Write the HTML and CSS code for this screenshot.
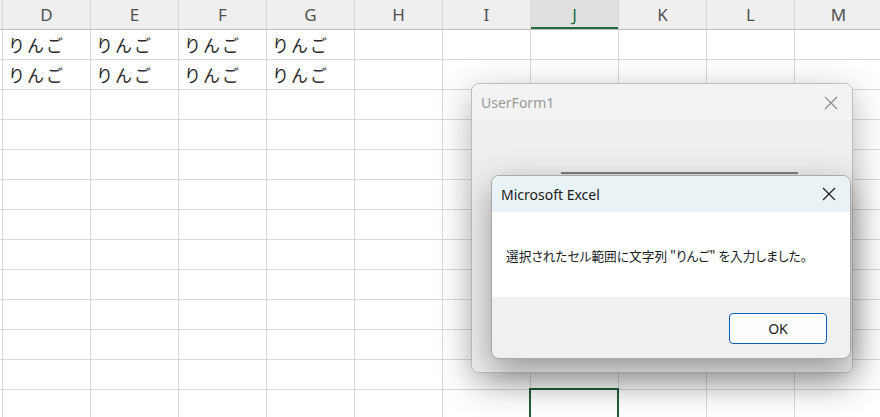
FILE: index.html
```html
<!DOCTYPE html>
<html lang="ja">
<head>
<meta charset="utf-8">
<title>Excel</title>
<link rel="stylesheet" href="styles.css">
</head>
<body>
<div class="sheet">
  <div class="row head">
    <div class="c edge"></div><div class="c">D</div><div class="c">E</div><div class="c">F</div><div class="c">G</div><div class="c">H</div><div class="c">I</div><div class="c sel">J</div><div class="c">K</div><div class="c">L</div><div class="c">M</div>
  </div>
  <div class="row">
    <div class="c edge"></div><div class="c">りんご</div><div class="c">りんご</div><div class="c">りんご</div><div class="c">りんご</div><div class="c"></div><div class="c"></div><div class="c"></div><div class="c"></div><div class="c"></div><div class="c"></div>
  </div>
  <div class="row">
    <div class="c edge"></div><div class="c">りんご</div><div class="c">りんご</div><div class="c">りんご</div><div class="c">りんご</div><div class="c"></div><div class="c"></div><div class="c"></div><div class="c"></div><div class="c"></div><div class="c"></div>
  </div>
  <div class="row"><div class="c edge"></div><div class="c"></div><div class="c"></div><div class="c"></div><div class="c"></div><div class="c"></div><div class="c"></div><div class="c"></div><div class="c"></div><div class="c"></div><div class="c"></div></div>
  <div class="row"><div class="c edge"></div><div class="c"></div><div class="c"></div><div class="c"></div><div class="c"></div><div class="c"></div><div class="c"></div><div class="c"></div><div class="c"></div><div class="c"></div><div class="c"></div></div>
  <div class="row"><div class="c edge"></div><div class="c"></div><div class="c"></div><div class="c"></div><div class="c"></div><div class="c"></div><div class="c"></div><div class="c"></div><div class="c"></div><div class="c"></div><div class="c"></div></div>
  <div class="row"><div class="c edge"></div><div class="c"></div><div class="c"></div><div class="c"></div><div class="c"></div><div class="c"></div><div class="c"></div><div class="c"></div><div class="c"></div><div class="c"></div><div class="c"></div></div>
  <div class="row"><div class="c edge"></div><div class="c"></div><div class="c"></div><div class="c"></div><div class="c"></div><div class="c"></div><div class="c"></div><div class="c"></div><div class="c"></div><div class="c"></div><div class="c"></div></div>
  <div class="row"><div class="c edge"></div><div class="c"></div><div class="c"></div><div class="c"></div><div class="c"></div><div class="c"></div><div class="c"></div><div class="c"></div><div class="c"></div><div class="c"></div><div class="c"></div></div>
  <div class="row"><div class="c edge"></div><div class="c"></div><div class="c"></div><div class="c"></div><div class="c"></div><div class="c"></div><div class="c"></div><div class="c"></div><div class="c"></div><div class="c"></div><div class="c"></div></div>
  <div class="row"><div class="c edge"></div><div class="c"></div><div class="c"></div><div class="c"></div><div class="c"></div><div class="c"></div><div class="c"></div><div class="c"></div><div class="c"></div><div class="c"></div><div class="c"></div></div>
  <div class="row"><div class="c edge"></div><div class="c"></div><div class="c"></div><div class="c"></div><div class="c"></div><div class="c"></div><div class="c"></div><div class="c"></div><div class="c"></div><div class="c"></div><div class="c"></div></div>
  <div class="row"><div class="c edge"></div><div class="c"></div><div class="c"></div><div class="c"></div><div class="c"></div><div class="c"></div><div class="c"></div><div class="c"></div><div class="c"></div><div class="c"></div><div class="c"></div></div>
  <div class="row"><div class="c edge"></div><div class="c"></div><div class="c"></div><div class="c"></div><div class="c"></div><div class="c"></div><div class="c"></div><div class="c active"></div><div class="c"></div><div class="c"></div><div class="c"></div></div>
</div>

<div class="userform">
  <div class="uf-title">
    <span class="uf-caption">UserForm1</span>
    <svg class="x-icon" width="14" height="14" viewBox="0 0 14 14"><path d="M1 1 L13 13 M13 1 L1 13" stroke="#8a8a8a" stroke-width="1.1" fill="none"/></svg>
  </div>
  <div class="uf-body">
    <div class="uf-control"></div>
  </div>
</div>

<div class="msgbox">
  <div class="mb-title">
    <span class="mb-caption">Microsoft Excel</span>
    <svg class="x-icon" width="14" height="14" viewBox="0 0 14 14"><path d="M1 1 L13 13 M13 1 L1 13" stroke="#1a1a1a" stroke-width="1.1" fill="none"/></svg>
  </div>
  <div class="mb-body">選択されたセル範囲に文字列 "りんご" を入力しました。</div>
  <div class="mb-foot">
    <button class="ok">OK</button>
  </div>
</div>
</body>
</html>
```

FILE: styles.css
```css
html, body {
  margin: 0;
  padding: 0;
  background: #ffffff;
  overflow: hidden;
  width: 880px;
  height: 417px;
}

.sheet {
  display: flex;
  flex-direction: column;
  width: 890px;
}

.row {
  display: flex;
  height: 30px;
}

.c {
  box-sizing: border-box;
  width: 88px;
  height: 30px;
  flex: none;
  border-right: 1px solid #d9d9d9;
  border-bottom: 1px solid #d9d9d9;
  font-family: "Noto Sans CJK JP", sans-serif;
  font-size: 17px;
  letter-spacing: 2px;
  color: #2a2a2a;
  line-height: 29px;
  padding-left: 5px;
  white-space: nowrap;
  position: relative;
}

.c.edge {
  width: 3px;
  padding: 0;
}

.head .c {
  background: #efefef;
  border-bottom: 1px solid #bcbcbc;
  border-right: 1px solid #d6d6d6;
  font-family: "Noto Sans", sans-serif;
  font-size: 17px;
  letter-spacing: 0;
  color: #505050;
  text-align: center;
  padding: 0;
  line-height: 29px;
}

.head .c.sel {
  background: #e0e0e0;
  color: #1d6a3e;
  box-shadow: inset 0 -2px 0 #1e6b3e;
}

.c.active::after {
  content: "";
  position: absolute;
  top: -2px;
  left: -2px;
  right: -1px;
  bottom: -1px;
  border: 2px solid #1e5e38;
}

/* UserForm */
.userform {
  position: absolute;
  left: 471px;
  top: 83px;
  width: 382px;
  height: 290px;
  box-sizing: border-box;
  border: 1px solid #bdbdbd;
  border-radius: 8px;
  background: #f0f0f0;
  box-shadow: 0 10px 36px rgba(0, 0, 0, 0.30);
  overflow: hidden;
  display: flex;
  flex-direction: column;
}

.uf-title {
  height: 37px;
  flex: none;
  background: #f3f3f3;
  display: flex;
  align-items: center;
  justify-content: space-between;
  padding: 0 14px 0 9px;
}

.uf-caption {
  font-family: "Noto Sans", sans-serif;
  font-size: 14px;
  color: #9a9a9a;
}

.x-icon {
  display: block;
}

.uf-body {
  flex: 1;
  background: #efefef;
  position: relative;
}

.uf-control {
  position: absolute;
  left: 89px;
  top: 51px;
  width: 237px;
  height: 10px;
  border-top: 2px solid #7e7e7e;
  background: #e2e2e2;
}

/* Message box */
.msgbox {
  position: absolute;
  left: 491px;
  top: 175px;
  width: 360px;
  height: 184px;
  box-sizing: border-box;
  border: 1px solid #a8a8a8;
  border-radius: 8px;
  background: #f0f0f0;
  box-shadow: 0 12px 34px rgba(0, 0, 0, 0.38);
  overflow: hidden;
  display: flex;
  flex-direction: column;
}

.mb-title {
  height: 36px;
  flex: none;
  background: #e9f2f5;
  display: flex;
  align-items: center;
  justify-content: space-between;
  padding: 0 14px 0 9px;
}

.mb-caption {
  font-family: "Noto Sans", sans-serif;
  font-size: 14px;
  color: #1a1a1a;
}

.mb-body {
  height: 85px;
  flex: none;
  background: #ffffff;
  box-sizing: border-box;
  padding: 35px 0 0 14px;
  font-family: "Noto Sans CJK JP", sans-serif;
  font-size: 12.7px;
  line-height: 18px;
  color: #1a1a1a;
  font-feature-settings: "palt";
  white-space: nowrap;
}

.mb-foot {
  flex: 1;
  display: flex;
  justify-content: flex-end;
  align-items: flex-start;
  padding: 16px 23px 0 0;
}

.ok {
  width: 98px;
  height: 31px;
  box-sizing: border-box;
  border: 1px solid #0a63b8;
  border-radius: 4px;
  background: #fdfdfd;
  font-family: "Noto Sans", sans-serif;
  font-size: 14px;
  color: #1a1a1a;
  padding: 0;
}
```
